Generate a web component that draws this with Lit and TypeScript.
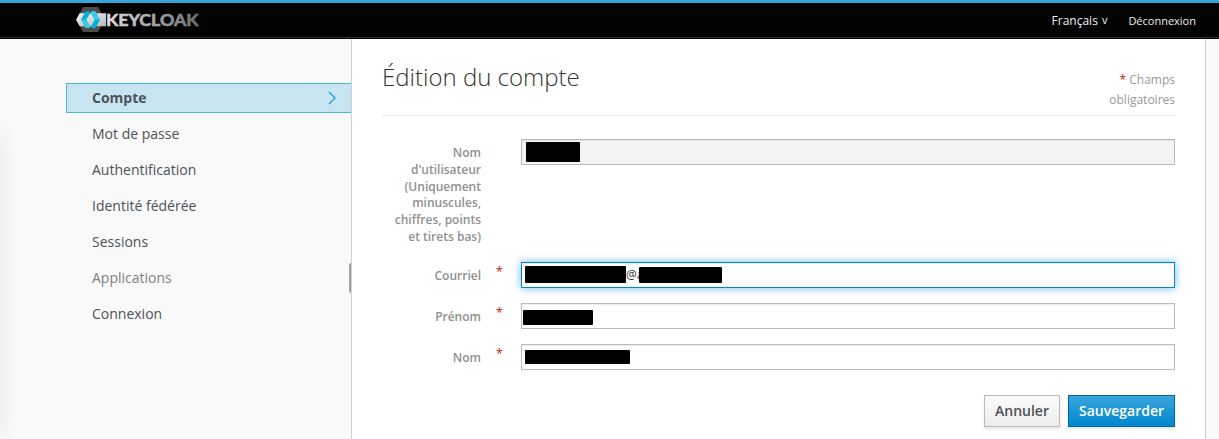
import { LitElement, html, css, svg, nothing } from "lit";
import { customElement, property } from "lit/decorators.js";

@customElement("kc-logo")
class KcLogo extends LitElement {
  static styles = css`
    :host { display: block; width: 126px; height: 28px; }
    svg { display: block; }
    .word { font: 700 17.5px "Lato", sans-serif; }
  `;
  render() {
    return html`<svg width="126" height="28" viewBox="76 6 126 28">
      ${svg`
      <defs>
        <linearGradient id="word" gradientUnits="userSpaceOnUse" x1="106" y1="0" x2="199" y2="0">
          <stop offset="0" stop-color="#e2e2e2"/><stop offset="1" stop-color="#6e6e6e"/>
        </linearGradient>
        <linearGradient id="band" x1="0" y1="0" x2="1" y2="1">
          <stop offset="0" stop-color="#f4f4f4"/><stop offset="1" stop-color="#b9b9b9"/>
        </linearGradient>
      </defs>
      <polygon points="83,7 98,7 105,19.5 98,32 83,32 76.5,19.5" fill="#4d4d4d"/>
      <polygon points="79.7,13.2 106,13.2 106,26.2 79.7,26.2 76,19.7" fill="url(#band)"/>
      <polygon points="85.6,11.3 89.2,11.3 90.2,13 86.2,19.7 90.2,26.4 89.2,28.1 85.6,28.1 81,19.7" fill="#00b1dc"/>
      <polygon points="81,19.7 86.2,19.7 90.2,26.4 89.2,28.1 85.6,28.1" fill="#3cc9ea"/>
      <polygon points="95.4,11.3 91.8,11.3 90.8,13 94.8,19.7 90.8,26.4 91.8,28.1 95.4,28.1 100,19.7" fill="#00b1dc"/>
      <polygon points="100,19.7 94.8,19.7 90.8,13 91.8,11.3 95.4,11.3" fill="#3cc9ea"/>
      <text class="word" x="106" y="25.8" textLength="92.5" lengthAdjust="spacingAndGlyphs"
        fill="url(#word)" stroke="url(#word)" stroke-width="0.6">KEYCLOAK</text>
      `}
    </svg>`;
  }
}

@customElement("kc-field")
class KcField extends LitElement {
  @property() label = "";
  @property({ type: Boolean }) required = false;
  @property({ type: Boolean, reflect: true }) disabled = false;
  @property({ type: Boolean, reflect: true }) focused = false;
  static styles = css`
    :host { display: grid; grid-template-columns: 99px 40px 1fr; align-items: start; }
    .label {
      padding: 6px 0 1px 8px; text-align: right; font-weight: 600; font-size: 12px;
      line-height: 16.8px; color: #909090;
    }
    .star { padding-left: 15px; color: #d0210f; font-size: 12.5px; line-height: 20px; }
    .input {
      box-sizing: border-box; height: 26px; border: 1px solid #bbb; background: #fff;
      box-shadow: inset 0 1px 1px rgba(0, 0, 0, 0.075); font-size: 12px; line-height: 23px; color: #333;
      display: flex;
    }
    :host([disabled]) .input { background: #f4f4f4; }
    :host([focused]) .input {
      border-color: #0088ce;
      box-shadow: inset 0 1px 1px rgba(0, 0, 0, 0.075), 0 0 8px rgba(0, 136, 206, 0.6);
    }
  `;
  render() {
    return html`<div class="label">${this.label}</div>
      <div class="star">${this.required ? "*" : nothing}</div>
      <div class="input"><slot></slot></div>`;
  }
}

@customElement("app-root")
class AppRoot extends LitElement {
  static styles = css`
    :host {
      display: flex; flex-direction: column; height: 439px; overflow: hidden; position: relative;
      background: #f9f9f9; font-family: "Open Sans", sans-serif; font-size: 12px; color: #333;
    }
    .header {
      box-sizing: border-box; height: 39px; flex: none; border-top: 3px solid #39a5dc;
      background: linear-gradient(#030303 34px, #2b2b2b 34px, #2b2b2b 35px, #030303 35px);
      display: flex; align-items: flex-start; padding: 3px 23px 0 76px;
    }
    .tools { margin-left: auto; display: flex; color: #eee; line-height: 16px; padding-top: 7px; }
    .lang { display: flex; gap: 4px; font-size: 12px; }
    .caret { font-size: 11px; margin-top: -1px; }
    .logout { font-size: 11px; margin-left: 21px; }
    .main { flex: 1; display: flex; min-height: 0; }
    .side { width: 285px; padding: 44px 0 0 66px; }
    .nav { display: flex; flex-direction: column; gap: 6px; }
    .item {
      box-sizing: border-box; height: 30px; padding: 0 14px 0 26px; font-size: 14px; line-height: 30px;
      color: #4d5258; display: flex; justify-content: space-between; align-items: center;
    }
    .item.active {
      border: 1px solid #4db8df; border-right: 0; padding-left: 25px; background: #c7e5f0; font-weight: 700;
    }
    .item.muted { color: #818181; }
    .shade {
      position: absolute; left: 0; top: 120px; width: 16px; height: 319px;
      background: linear-gradient(90deg, rgba(0, 0, 0, 0.04), transparent);
      mask-image: linear-gradient(transparent, #000 36px, #000 295px, rgba(0, 0, 0, 0.3));
    }
    .grip { position: absolute; left: 349px; top: 263px; width: 2px; height: 30px; background: #a3a3a3; border-radius: 2px 0 0 2px; }
    .card {
      box-sizing: border-box; width: 855px; background: #fff; border: solid #cfcfcf; border-width: 0 1px;
      padding: 0 30px;
    }
    .head { box-sizing: border-box; height: 77px; border-bottom: 1px solid #e6e6e6; display: flex; justify-content: space-between; }
    h1 { margin: 21px 0 0; font-size: 24px; line-height: 33px; font-weight: 300; color: #333; }
    .hint { width: 90px; padding-top: 31px; text-align: right; line-height: 20px; color: #999; }
    .hint span { color: #d0210f; }
    .form { display: flex; flex-direction: column; gap: 15px; padding-top: 23px; }
    .mask { background: #000; border-radius: 1px; flex: none; position: relative; }
    .m1 { width: 54px; height: 20px; margin: 2px 0 0 4px; }
    .m2 { width: 101px; height: 17px; margin: 3px 0 0 3px; }
    .peek { width: 13px; white-space: nowrap; }
    .m3 { width: 83px; height: 16px; margin-top: 4px; }
    .m4 { width: 70px; height: 15px; margin: 6px 0 0 1px; }
    .m5 { width: 105px; height: 14px; margin: 5px 0 0 3px; }
    .actions { display: flex; justify-content: flex-end; gap: 8px; padding-top: 25px; }
    .btn {
      box-sizing: border-box; height: 32px; border: 1px solid #bbb; padding: 0 10px;
      font: 600 14px/30px "Open Sans", sans-serif; color: #4d5258; text-align: center;
      background: linear-gradient(#fafafa, #ededed); box-shadow: 0 2px 3px rgba(3, 3, 3, 0.1);
      width: 76px;
    }
    .primary { width: 107px; color: #fff; border-color: #00659c; background: linear-gradient(#39a5dc, #0088ce); }
  `;
  render() {
    const items = ["Compte", "Mot de passe", "Authentification", "Identité fédérée", "Sessions", "Applications", "Connexion"];
    return html`
      <div class="header">
        <kc-logo></kc-logo>
        <div class="tools">
          <span class="lang"><span>Français</span><span class="caret">v</span></span>
          <span class="logout">Déconnexion</span>
        </div>
      </div>
      <div class="main">
        <div class="side">
          <div class="nav">
            ${items.map((t, i) => html`<div class="item ${i === 0 ? "active" : t === "Applications" ? "muted" : ""}">
              <span>${t}</span>${i === 0
                ? html`<svg width="10" height="14" viewBox="0 0 10 14"><path d="M2 1L8 7L2 13" fill="none" stroke="#1fa3da" stroke-width="1.4"/></svg>`
                : nothing}</div>`)}
          </div>
        </div>
        <div class="card">
          <div class="head">
            <h1>Édition du compte</h1>
            <div class="hint"><span>*</span> Champs obligatoires</div>
          </div>
          <div class="form">
            <kc-field label="Nom d'utilisateur (Uniquement minuscules, chiffres, points et tirets bas)" disabled>
              <div class="mask m1"></div>
            </kc-field>
            <kc-field label="Courriel" required focused>
              <div class="mask m2"></div><div class="peek">@a</div><div class="mask m3"></div>
            </kc-field>
            <kc-field label="Prénom" required><div class="mask m4"></div></kc-field>
            <kc-field label="Nom" required><div class="mask m5"></div></kc-field>
          </div>
          <div class="actions">
            <button class="btn">Annuler</button>
            <button class="btn primary">Sauvegarder</button>
          </div>
        </div>
      </div>
      <div class="shade"></div>
      <div class="grip"></div>
    `;
  }
}
